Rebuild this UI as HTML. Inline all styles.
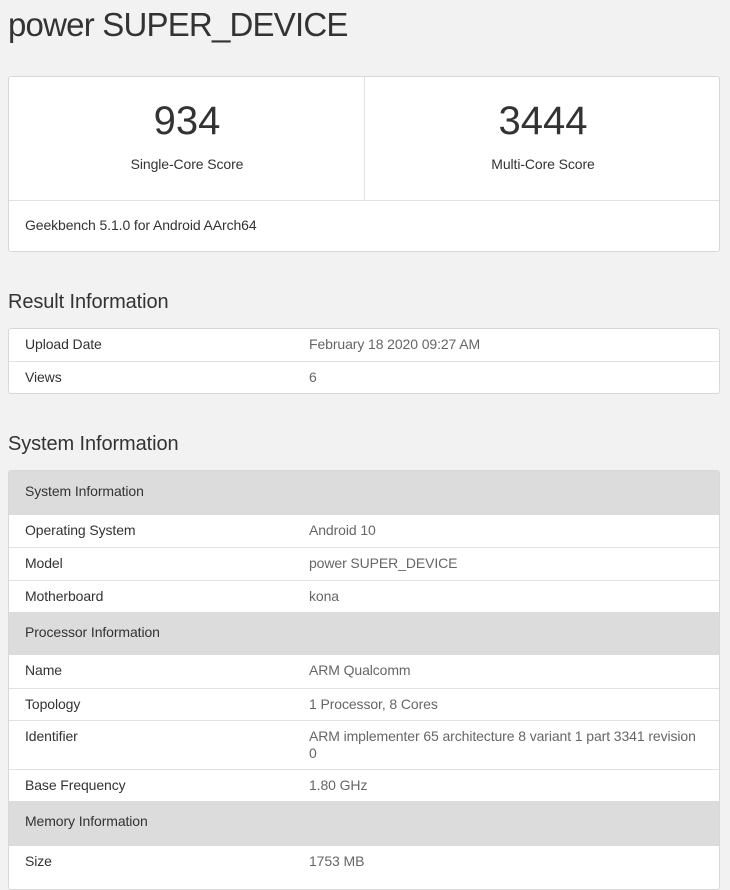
<!DOCTYPE html>
<html><head><meta charset="utf-8"><style>
body{margin:0;width:730px;height:873px;background:#f2f2f2;font-family:"Liberation Sans",sans-serif;color:#333;position:relative;overflow:hidden}
.a{position:absolute;white-space:nowrap}
.card{position:absolute;left:8px;width:712px;background:#fff;border:1px solid #d8d8d8;border-radius:3px;box-sizing:border-box}
.row{position:absolute;left:0;width:100%;border-top:1px solid #e2e2e2;box-sizing:border-box;font-size:14px;letter-spacing:-0.1px}
.row .k{position:absolute;left:16px;top:7px;color:#333}
.row .v{position:absolute;left:300px;top:7px;color:#666;white-space:normal;width:392px;line-height:17px}
.hd{background:#dcdcdc;border-top:none}
.hd .k{top:12px}
h2{position:absolute;left:8px;margin:0;font-weight:normal;font-size:20px;color:#333;letter-spacing:-0.1px}
</style></head><body>
<div class="a" style="left:8px;top:6px;font-size:33px;color:#333;letter-spacing:-0.8px">power SUPER_DEVICE</div>
<div class="card" style="top:76px;height:176px">
 <div class="a" style="left:0;width:356px;top:22px;text-align:center;font-size:40px;color:#333">934</div>
 <div class="a" style="left:0;width:356px;top:79px;text-align:center;font-size:14px;letter-spacing:-0.1px">Single-Core Score</div>
 <div class="a" style="left:356px;width:356px;top:22px;text-align:center;font-size:40px;color:#333">3444</div>
 <div class="a" style="left:356px;width:356px;top:79px;text-align:center;font-size:14px;letter-spacing:-0.1px">Multi-Core Score</div>
 <div class="a" style="left:355px;top:0;width:1px;height:123px;background:#e2e2e2"></div>
 <div class="a" style="left:0;top:123px;width:100%;height:1px;background:#e2e2e2"></div>
 <div class="a" style="left:16px;top:140px;font-size:14px;letter-spacing:-0.1px">Geekbench 5.1.0 for Android AArch64</div>
</div>
<h2 style="top:291px">Result Information</h2>
<div class="card" style="top:328px;height:66px">
 <div class="row" style="top:0;height:32px;border-top:none"><span class="k">Upload Date</span><span class="v">February 18 2020 09:27 AM</span></div>
 <div class="row" style="top:32px;height:33px"><span class="k">Views</span><span class="v">6</span></div>
</div>
<h2 style="top:433px">System Information</h2>
<div class="card" style="top:470px;height:420px;overflow:hidden">
 <div class="row hd" style="top:0;height:44px"><span class="k">System Information</span></div>
 <div class="row" style="top:44px;height:32px;border-top:none"><span class="k">Operating System</span><span class="v">Android 10</span></div>
 <div class="row" style="top:76px;height:33px"><span class="k">Model</span><span class="v">power SUPER_DEVICE</span></div>
 <div class="row" style="top:109px;height:32px"><span class="k">Motherboard</span><span class="v">kona</span></div>
 <div class="row hd" style="top:141px;height:43px"><span class="k">Processor Information</span></div>
 <div class="row" style="top:184px;height:33px;border-top:none"><span class="k">Name</span><span class="v">ARM Qualcomm</span></div>
 <div class="row" style="top:217px;height:32px"><span class="k">Topology</span><span class="v">1 Processor, 8 Cores</span></div>
 <div class="row" style="top:249px;height:49px"><span class="k">Identifier</span><span class="v">ARM implementer 65 architecture 8 variant 1 part 3341 revision<br>0</span></div>
 <div class="row" style="top:298px;height:32px"><span class="k">Base Frequency</span><span class="v">1.80 GHz</span></div>
 <div class="row hd" style="top:330px;height:45px"><span class="k">Memory Information</span></div>
 <div class="row" style="top:375px;height:40px;border-top:none"><span class="k">Size</span><span class="v">1753 MB</span></div>
</div>
</body></html>
